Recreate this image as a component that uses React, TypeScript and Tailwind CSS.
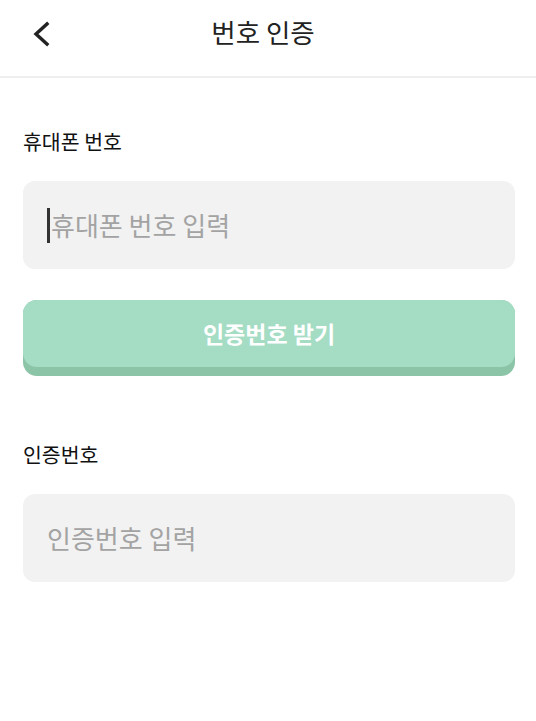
import React from "react";

const font = { fontFamily: '"Noto Sans CJK KR", "Noto Sans", sans-serif' };

function Field({ placeholder, caret }: { placeholder: string; caret?: boolean }) {
  return (
    <div className="flex h-[88px] items-center rounded-[12px] bg-[#f2f2f2] pl-[24px]">
      {caret && <span className="mr-[1px] h-[35px] w-[3px] bg-[#333333]" />}
      <span className="text-[26px] leading-none text-[#a3a3a3]">{placeholder}</span>
    </div>
  );
}

export default function App() {
  return (
    <div className="min-h-[721px] w-[536px] bg-white" style={font}>
      <header className="relative flex h-[78px] items-center justify-center border-b-[2px] border-[#efefef]">
        <button className="absolute left-[31px] top-[21px] flex h-[26px] w-[20px] items-center justify-center">
          <svg width="20" height="26" viewBox="0 0 20 26" fill="none">
            <path d="M16 3 L5 13 L16 23" stroke="#222222" strokeWidth="3.4" strokeLinecap="square" strokeLinejoin="miter" />
          </svg>
        </button>
        <h1 className="mb-[12px] mr-[10px] text-[26.5px] font-normal leading-none text-[#222222]">번호 인증</h1>
      </header>

      <main className="flex flex-col pl-[23px] pr-[21px]">
        <label className="mt-[51px] text-[20.5px] leading-[24px] text-[#111111]">휴대폰 번호</label>
        <div className="mt-[28px]">
          <Field placeholder="휴대폰 번호 입력" caret />
        </div>

        <div className="mt-[31px] rounded-[14px] bg-[#8cc4a8] pb-[9px]">
          <div className="flex h-[67px] items-center justify-center rounded-[14px] bg-[#a4dcc4]">
            <span className="text-[23px] font-bold leading-none text-white">인증번호 받기</span>
          </div>
        </div>

        <label className="mt-[66px] text-[20.5px] leading-[24px] text-[#111111]">인증번호</label>
        <div className="mt-[28px]">
          <Field placeholder="인증번호 입력" />
        </div>
      </main>
    </div>
  );
}
